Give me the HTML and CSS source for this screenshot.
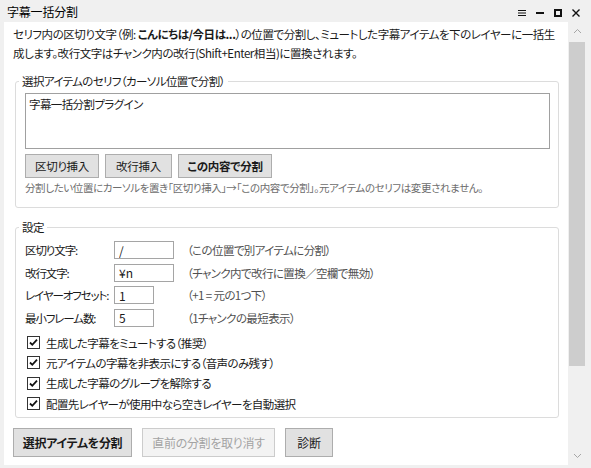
FILE: index.html
```html
<!DOCTYPE html>
<html lang="ja">
<head>
  <meta charset="UTF-8" />
  <title>字幕一括分割</title>
  <link rel="stylesheet" href="styles.css">
</head>
<body>
  <div class="window">
    <div class="titlebar">
      <span class="title">字幕一括分割</span>
      <div class="win-controls">
        <svg class="win-icon" width="8" height="8" viewBox="0 0 8 8"><path d="M0 1.5h8M0 4h8M0 6.5h8" stroke="#111" stroke-width="1"/></svg>
        <svg class="win-icon" width="8" height="8" viewBox="0 0 8 8"><path d="M0 4h8" stroke="#111" stroke-width="2"/></svg>
        <svg class="win-icon" width="8" height="8" viewBox="0 0 8 8"><rect x="1" y="1" width="6" height="6" fill="none" stroke="#111" stroke-width="2"/></svg>
        <svg class="win-icon" width="8" height="8" viewBox="0 0 8 8"><path d="M0.5 0.5l7 7M7.5 0.5l-7 7" stroke="#111" stroke-width="1.4"/></svg>
      </div>
    </div>

    <div class="frame">
      <div class="content">
        <p class="intro">セリフ内の区切り文字（例: <b>こんにちは/今日は...</b>）の位置で分割し、ミュートした字幕アイテムを下のレイヤーに一括生<br>成します。改行文字はチャンク内の改行(Shift+Enter相当)に置換されます。</p>

        <fieldset class="group">
          <legend>選択アイテムのセリフ（カーソル位置で分割）</legend>
          <textarea class="serif-box">字幕一括分割プラグイン</textarea>
          <div class="btn-row">
            <button class="btn btn-sm w-split">区切り挿入</button>
            <button class="btn btn-sm w-break">改行挿入</button>
            <button class="btn btn-sm btn-bold w-apply">この内容で分割</button>
          </div>
          <p class="hint">分割したい位置にカーソルを置き「区切り挿入」→「この内容で分割」。元アイテムのセリフは変更されません。</p>
        </fieldset>

        <fieldset class="group settings">
          <legend>設定</legend>
          <div class="field-grid">
            <label class="field-label">区切り文字:</label>
            <input class="field-input wide" type="text" value="/">
            <span class="field-note">（この位置で別アイテムに分割）</span>

            <label class="field-label">改行文字:</label>
            <input class="field-input wide" type="text" value="¥n">
            <span class="field-note">（チャンク内で改行に置換／空欄で無効）</span>

            <label class="field-label">レイヤーオフセット:</label>
            <input class="field-input narrow" type="text" value="1">
            <span class="field-note">（+1 = 元の1つ下）</span>

            <label class="field-label">最小フレーム数:</label>
            <input class="field-input narrow" type="text" value="5">
            <span class="field-note">（1チャンクの最短表示）</span>
          </div>

          <div class="checks">
            <label class="check"><span class="check-box"><svg width="9" height="9" viewBox="0 0 9 9"><path d="M1 4.5l2.3 2.3L8 1.6" fill="none" stroke="#111" stroke-width="1.8"/></svg></span>生成した字幕をミュートする（推奨）</label>
            <label class="check"><span class="check-box"><svg width="9" height="9" viewBox="0 0 9 9"><path d="M1 4.5l2.3 2.3L8 1.6" fill="none" stroke="#111" stroke-width="1.8"/></svg></span>元アイテムの字幕を非表示にする（音声のみ残す）</label>
            <label class="check"><span class="check-box"><svg width="9" height="9" viewBox="0 0 9 9"><path d="M1 4.5l2.3 2.3L8 1.6" fill="none" stroke="#111" stroke-width="1.8"/></svg></span>生成した字幕のグループを解除する</label>
            <label class="check"><span class="check-box"><svg width="9" height="9" viewBox="0 0 9 9"><path d="M1 4.5l2.3 2.3L8 1.6" fill="none" stroke="#111" stroke-width="1.8"/></svg></span>配置先レイヤーが使用中なら空きレイヤーを自動選択</label>
          </div>
        </fieldset>

        <div class="actions">
          <button class="btn btn-lg btn-bold w-run">選択アイテムを分割</button>
          <button class="btn btn-lg w-undo" disabled>直前の分割を取り消す</button>
          <button class="btn btn-lg w-diag">診断</button>
        </div>
      </div>

      <div class="scrollbar">
        <svg class="scroll-arrow" width="9" height="6" viewBox="0 0 9 6"><path d="M1 5l3.5-3.5L8 5" fill="none" stroke="#a6a6a6" stroke-width="1"/></svg>
        <div class="scroll-track"><div class="scroll-thumb"></div></div>
        <svg class="scroll-arrow" width="9" height="6" viewBox="0 0 9 6"><path d="M1 1l3.5 3.5L8 1" fill="none" stroke="#a6a6a6" stroke-width="1"/></svg>
      </div>
    </div>
  </div>
</body>
</html>
```

FILE: styles.css
```css
* {
  box-sizing: border-box;
}
body {
  margin: 0;
  background: #f0f0f0;
  color: #1a1a1a;
  font-family: "Noto Sans CJK JP", "Noto Sans", sans-serif;
  font-size: 11.5px;
  letter-spacing: -0.6px;
  font-feature-settings: "palt";
}
.window {
  width: 591px;
  height: 468px;
  display: flex;
  flex-direction: column;
}
.titlebar {
  height: 22px;
  display: flex;
  align-items: center;
  justify-content: space-between;
  padding: 0 11px 0 7px;
}
.title {
  font-size: 12px;
  letter-spacing: -0.2px;
  color: #000;
}
.win-controls {
  display: flex;
  gap: 10px;
  margin-top: 4px;
}
.frame {
  display: flex;
  height: 443px;
  padding-left: 4px;
}
.content {
  width: 564px;
  background: #fff;
  padding: 3px 9px 0 9px;
}
.intro {
  margin: 0;
  line-height: 19px;
  white-space: nowrap;
  letter-spacing: -0.45px;
}
.intro b {
  font-weight: bold;
}
.group {
  margin: 10px 0 0 2px;
  padding: 4px 9px 11px 9px;
  border: 1px solid #dcdcdc;
  border-radius: 3px;
  min-width: 0;
}
.group legend {
  padding: 0 3px;
  margin-left: -6px;
  line-height: 16px;
}
.serif-box {
  display: block;
  width: 525px;
  height: 56px;
  resize: none;
  border: 1px solid #a0a0a0;
  padding: 2px 3px;
  font: inherit;
  font-size: 11.5px;
  letter-spacing: -0.6px;
  line-height: 16px;
  color: #1a1a1a;
}
.btn-row {
  display: flex;
  gap: 6px;
  margin-top: 5px;
}
.btn {
  font: inherit;
  font-size: 11.5px;
  letter-spacing: -0.3px;
  font-feature-settings: "palt";
  background: #e1e1e1;
  border: 1px solid #adadad;
  color: #1a1a1a;
  padding: 0;
  border-radius: 0;
}
.btn-sm {
  height: 24px;
}
.w-split {
  width: 74px;
}
.w-break {
  width: 67px;
}
.w-apply {
  width: 94px;
}
.btn-bold {
  font-weight: bold;
}
.btn:disabled {
  background: #f3f3f3;
  border-color: #cccccc;
  color: #a3a3a3;
}
.hint {
  margin: 2px 0 0;
  font-size: 10.5px;
  letter-spacing: -0.4px;
  line-height: 16px;
  color: #6d6d6d;
  white-space: nowrap;
}
.settings {
  margin-top: 11px;
  padding-top: 6px;
  padding-bottom: 3px;
}
.field-grid {
  display: grid;
  grid-template-columns: 89px auto 1fr;
  row-gap: 4.5px;
  align-items: center;
}
.field-label {
  line-height: 18px;
  white-space: nowrap;
  letter-spacing: -1.1px;
}
.field-input {
  height: 18px;
  border: 1px solid #a5a5a5;
  padding: 0 4px;
  font: inherit;
  font-size: 12px;
  letter-spacing: 0;
  color: #1a1a1a;
}
.wide {
  width: 60px;
}
.narrow {
  width: 40px;
}
.field-note {
  margin-left: 13px;
  color: #505050;
  white-space: nowrap;
}
.checks {
  margin-top: 6px;
  display: flex;
  flex-direction: column;
}
.check {
  height: 20.3px;
  display: flex;
  align-items: center;
  gap: 6px;
  padding-left: 2px;
}
.check-box {
  width: 13px;
  height: 13px;
  border: 1px solid #333;
  background: #fff;
  display: flex;
  align-items: center;
  justify-content: center;
}
.actions {
  display: flex;
  gap: 10px;
  margin-top: 10px;
}
.btn-lg {
  height: 29px;
  font-size: 12px;
}
.w-run {
  width: 119px;
}
.w-undo {
  width: 133px;
}
.w-diag {
  width: 48px;
}
.scrollbar {
  width: 18px;
  display: flex;
  flex-direction: column;
  align-items: center;
  background: #f0f0f0;
}
.scroll-arrow {
  margin: 6px 0;
}
.scroll-track {
  flex: 1;
  width: 100%;
  display: flex;
  flex-direction: column;
  align-items: center;
}
.scroll-thumb {
  width: 16px;
  height: 324px;
  background: #cdcdcd;
  margin-top: 2px;
}
```
